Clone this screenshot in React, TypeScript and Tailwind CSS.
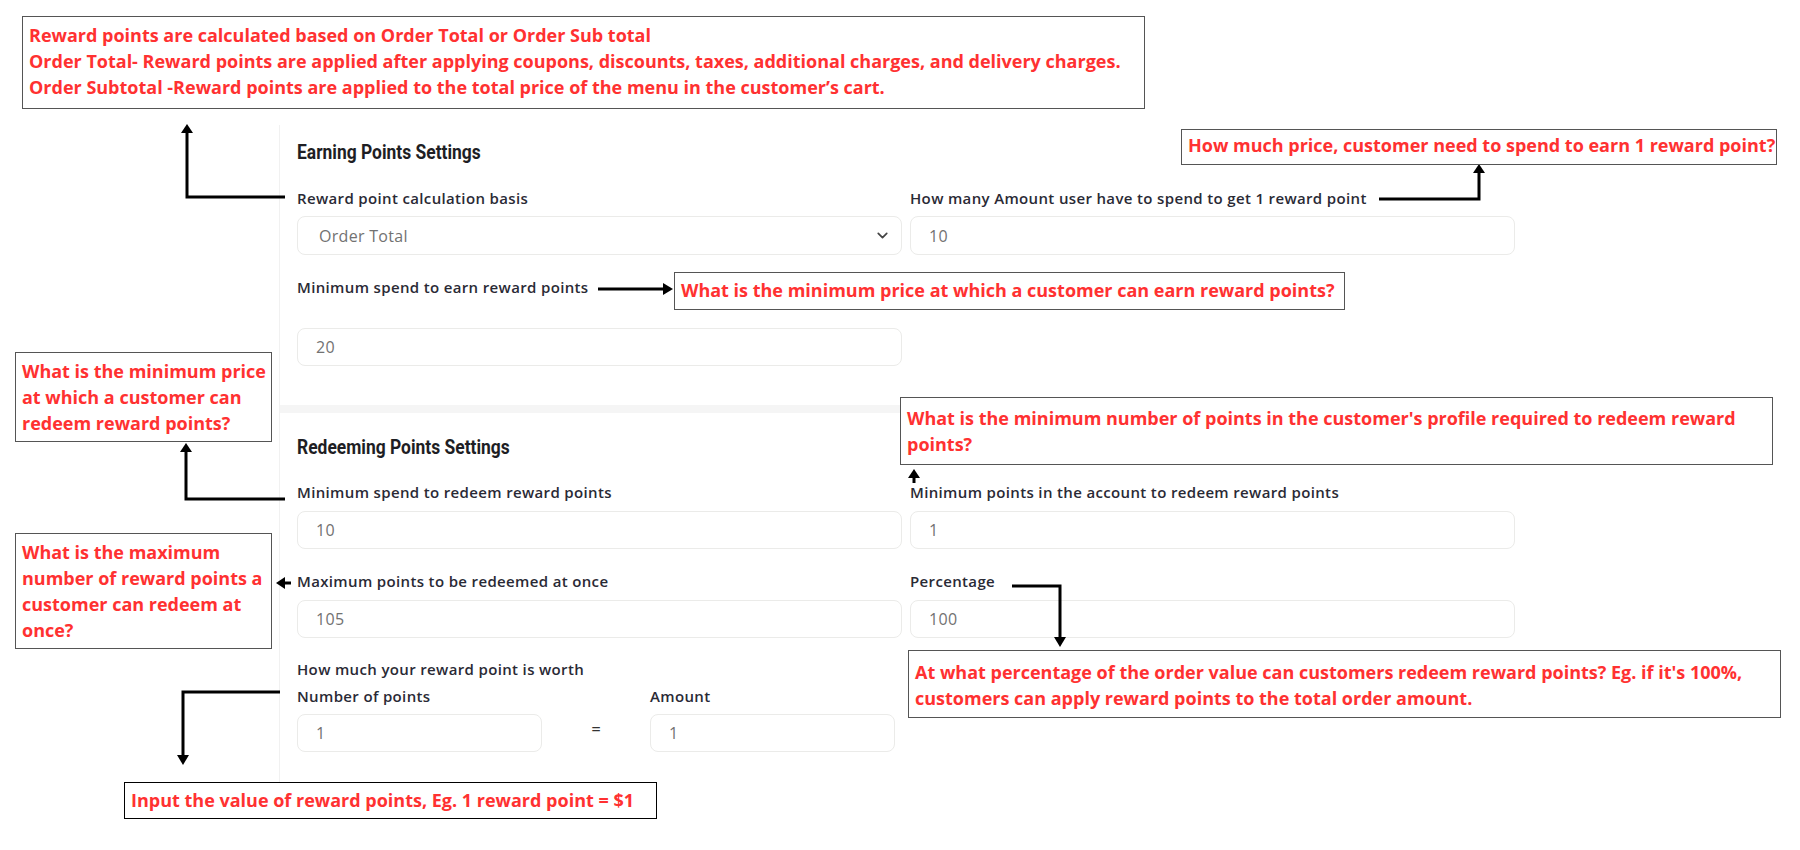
import { ChevronDown } from "lucide-react";

// callout boxes placed over the settings form
type Note = {
  lines: string[];
  box: string;
};

const notes: Note[] = [
  {
    lines: [
      "Reward points are calculated based on Order Total or Order Sub total",
      "Order Total- Reward points are applied after applying coupons, discounts, taxes, additional charges, and delivery charges.",
      "Order Subtotal -Reward points are applied to the total price of the menu in the customer\u2019s cart.",
    ],
    box: "left-[22px] top-[16px] w-[1123px] h-[93px] pt-[5px]",
  },
  {
    lines: ["How much price, customer need to spend to earn 1 reward point?"],
    box: "left-[1181px] top-[129px] w-[596px] h-[36px] pt-[2px]",
  },
  {
    lines: ["What is the minimum price at which a customer can earn reward points?"],
    box: "left-[674px] top-[272px] w-[671px] h-[38px] pt-[4px]",
  },
  {
    lines: ["What is the minimum price", "at which a customer can", "redeem reward points?"],
    box: "left-[15px] top-[352px] w-[257px] h-[90px] pt-[5px]",
  },
  {
    lines: ["What is the maximum", "number of reward points a", "customer can redeem at", "once?"],
    box: "left-[15px] top-[533px] w-[257px] h-[116px] pt-[5px]",
  },
  {
    lines: [
      "What is the minimum number of points in the customer's profile required to redeem reward",
      "points?",
    ],
    box: "left-[900px] top-[397px] w-[873px] h-[68px] pt-[7px]",
  },
  {
    lines: [
      "At what percentage of the order value can customers redeem reward points? Eg. if it's 100%,",
      "customers can apply reward points to the total order amount.",
    ],
    box: "left-[908px] top-[650px] w-[873px] h-[68px] pt-[8px]",
  },
  {
    lines: ["Input the value of reward points, Eg. 1 reward point = $1"],
    box: "left-[124px] top-[782px] w-[533px] h-[37px] pt-[4px] !border-black",
  },
];

function Label({ children, className = "" }: { children: React.ReactNode; className?: string }) {
  return (
    <div className={`text-[15px] leading-4 font-semibold tracking-[0.35px] text-[#2a2a35] whitespace-nowrap ${className}`}>
      {children}
    </div>
  );
}

function Field({ value }: { value: string }) {
  return (
    <div className="h-[38px] rounded-lg border border-[#ebebe9] bg-white px-[18px] flex items-center text-[16px] tracking-[0.3px] text-[#727272]">
      {value}
    </div>
  );
}

function Heading({ children }: { children: React.ReactNode }) {
  return (
    <h3
      className="inline-block origin-left scale-x-[0.83] whitespace-nowrap text-[21px] leading-6 font-bold text-[#1e1e24]"
      style={{ fontFamily: 'Roboto, "Noto Sans", sans-serif' }}
    >
      {children}
    </h3>
  );
}

function Arrows() {
  const head = "fill-black";
  return (
    <svg className="absolute inset-0 pointer-events-none" width={1800} height={850}>
      <g stroke="black" strokeWidth={3} fill="none" strokeLinejoin="miter">
        <polyline points="285,197 187,197 187,131" />
        <polyline points="1379,199 1479,199 1479,171" />
        <polyline points="598,289 664,289" />
        <polyline points="285,499 186,499 186,450" />
        <polyline points="291,583 283,583" />
        <polyline points="914,483 914,476" />
        <polyline points="1012,586 1060,586 1060,638" />
        <polyline points="280,692 183,692 183,756" />
      </g>
      <polygon className={head} points="187,124 181,133 193,133" />
      <polygon className={head} points="1479,164 1473,173 1485,173" />
      <polygon className={head} points="673,289 663,283 663,295" />
      <polygon className={head} points="186,443 180,452 192,452" />
      <polygon className={head} points="276,583 285,577 285,589" />
      <polygon className={head} points="914,469 908,478 920,478" />
      <polygon className={head} points="1060,647 1054,637 1066,637" />
      <polygon className={head} points="183,765 177,755 189,755" />
    </svg>
  );
}

export default function App() {
  return (
    <div
      className="relative w-[1800px] h-[850px] overflow-hidden bg-white"
      style={{ fontFamily: '"Open Sans", "Noto Sans", sans-serif' }}
    >
      <div className="pt-[125px] pl-[279px]">
        <div className="w-[1290px] border-l border-[#f1f1f1] bg-white">
          {/* earning section */}
          <section className="px-[17px] pt-[15px] pb-[39px]">
            <Heading>Earning Points Settings</Heading>
            <div className="mt-[25px] grid grid-cols-[605px_605px] gap-x-2">
              <div>
                <Label className="mb-[10px]">Reward point calculation basis</Label>
                <div className="h-[39px] rounded-lg border border-[#ebebe9] bg-white pl-[21px] pr-[10px] flex items-center justify-between text-[16px] tracking-[0.3px] text-[#727272]">
                  <span>Order Total</span>
                  <ChevronDown size={17} strokeWidth={2.4} className="text-[#444]" />
                </div>
              </div>
              <div>
                <Label className="mb-[10px]">How many Amount user have to spend to get 1 reward point</Label>
                <div className="h-[39px] rounded-lg border border-[#ebebe9] bg-white px-[18px] flex items-center text-[16px] tracking-[0.3px] text-[#727272]">
                  10
                </div>
              </div>
              <div className="mt-6">
                <Label className="mb-[33px]">Minimum spend to earn reward points</Label>
                <Field value="20" />
              </div>
            </div>
          </section>

          <div className="h-2 bg-[#f5f5f5]" />

          {/* redeeming section */}
          <section className="px-[17px] pt-[22px] pb-[38px]">
            <Heading>Redeeming Points Settings</Heading>
            <div className="mt-[24px] grid grid-cols-[605px_605px] gap-x-2 gap-y-[24px]">
              <div>
                <Label className="mb-[11px]">Minimum spend to redeem reward points</Label>
                <Field value="10" />
              </div>
              <div>
                <Label className="mb-[11px]">Minimum points in the account to redeem reward points</Label>
                <Field value="1" />
              </div>
              <div>
                <Label className="mb-[11px]">Maximum points to be redeemed at once</Label>
                <Field value="105" />
              </div>
              <div>
                <Label className="mb-[11px]">Percentage</Label>
                <Field value="100" />
              </div>
            </div>
            <div className="mt-[23px]">
              <Label>How much your reward point is worth</Label>
              <div className="mt-[11px] grid grid-cols-[245px_108px_245px] items-end">
                <div>
                  <Label className="mb-[10px]">Number of points</Label>
                  <Field value="1" />
                </div>
                <div className="h-[38px] flex items-center justify-center pb-[8px] text-[16px] font-semibold text-[#333]">
                  =
                </div>
                <div>
                  <Label className="mb-[10px]">Amount</Label>
                  <Field value="1" />
                </div>
              </div>
            </div>
          </section>
        </div>
      </div>

      <Arrows />

      {notes.map((n, i) => (
        <div
          key={i}
          className={`absolute border-[1.5px] border-[#555] bg-white px-[6px] text-[18px] leading-[26px] font-bold text-[#ff3131] whitespace-nowrap ${n.box}`}
        >
          {n.lines.map((l, j) => (
            <div key={j}>{l}</div>
          ))}
        </div>
      ))}
    </div>
  );
}
